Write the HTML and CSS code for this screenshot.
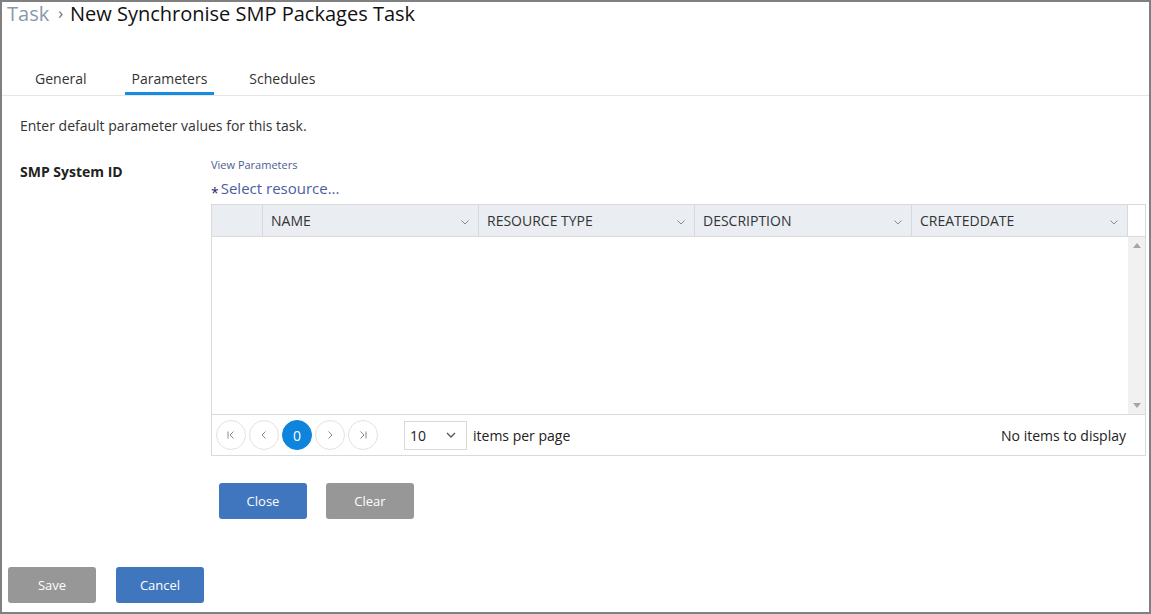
FILE: index.html
```html
<!DOCTYPE html>
<html>
<head>
<meta charset="utf-8">
<link rel="stylesheet" href="styles.css">
</head>
<body>
<div class="frame">
  <div class="title"><span class="crumb">Task</span><span class="sep">›</span><span class="page">New Synchronise SMP Packages Task</span></div>
  <div class="tabs">
    <div class="tab tab-general">General</div>
    <div class="tab tab-params active">Parameters</div>
    <div class="tab tab-sched">Schedules</div>
  </div>
  <div class="content">
    <div class="intro">Enter default parameter values for this task.</div>
    <div class="form-row">
      <div class="label">SMP System ID</div>
      <div class="field">
        <div class="view-link">View Parameters</div>
        <div class="select-res"><span class="req">*</span>Select resource...</div>
        <div class="grid">
          <div class="grid-head">
            <div class="hcell c0"></div>
            <div class="hcell c1"><span>NAME</span><svg class="chev" viewBox="0 0 8 5" width="8" height="5"><path d="M0.5 0.5 L4 4 L7.5 0.5" fill="none" stroke="#8a8a8a" stroke-width="1"/></svg></div>
            <div class="hcell c2"><span>RESOURCE TYPE</span><svg class="chev" viewBox="0 0 8 5" width="8" height="5"><path d="M0.5 0.5 L4 4 L7.5 0.5" fill="none" stroke="#8a8a8a" stroke-width="1"/></svg></div>
            <div class="hcell c3"><span>DESCRIPTION</span><svg class="chev" viewBox="0 0 8 5" width="8" height="5"><path d="M0.5 0.5 L4 4 L7.5 0.5" fill="none" stroke="#8a8a8a" stroke-width="1"/></svg></div>
            <div class="hcell c4"><span>CREATEDDATE</span><svg class="chev" viewBox="0 0 8 5" width="8" height="5"><path d="M0.5 0.5 L4 4 L7.5 0.5" fill="none" stroke="#8a8a8a" stroke-width="1"/></svg></div>
            <div class="hcell c5"></div>
          </div>
          <div class="grid-body">
            <div class="rows"></div>
            <div class="scrollbar">
              <svg viewBox="0 0 8 5" width="8" height="5"><path d="M0 5 L4 0 L8 5 Z" fill="#a6a6a6"/></svg>
              <svg viewBox="0 0 8 5" width="8" height="5"><path d="M0 0 L4 5 L8 0 Z" fill="#a6a6a6"/></svg>
            </div>
          </div>
          <div class="pager">
            <div class="pbtn"><svg viewBox="0 0 10 10" width="10" height="10"><path d="M2 1.5 V8.5 M7.5 1.5 L4 5 L7.5 8.5" fill="none" stroke="#8a8a8a" stroke-width="1"/></svg></div>
            <div class="pbtn"><svg viewBox="0 0 10 10" width="10" height="10"><path d="M6.5 1.5 L3 5 L6.5 8.5" fill="none" stroke="#8a8a8a" stroke-width="1"/></svg></div>
            <div class="pbtn current">0</div>
            <div class="pbtn"><svg viewBox="0 0 10 10" width="10" height="10"><path d="M3.5 1.5 L7 5 L3.5 8.5" fill="none" stroke="#8a8a8a" stroke-width="1"/></svg></div>
            <div class="pbtn"><svg viewBox="0 0 10 10" width="10" height="10"><path d="M2.5 1.5 L6 5 L2.5 8.5 M8 1.5 V8.5" fill="none" stroke="#8a8a8a" stroke-width="1"/></svg></div>
            <div class="pagesize"><span>10</span><svg viewBox="0 0 10 6" width="10" height="6"><path d="M1 1 L5 5 L9 1" fill="none" stroke="#555" stroke-width="1.3"/></svg></div>
            <div class="perpage">items per page</div>
            <div class="noitems">No items to display</div>
          </div>
        </div>
        <div class="actions">
          <button class="btn btn-blue">Close</button>
          <button class="btn btn-gray">Clear</button>
        </div>
      </div>
    </div>
  </div>
  <div class="footer">
    <button class="btn btn-gray">Save</button>
    <button class="btn btn-blue">Cancel</button>
  </div>
</div>
</body>
</html>
```

FILE: styles.css
```css
* { box-sizing: border-box; }
html, body { margin: 0; padding: 0; background: #fff; }
body { font-family: "Open Sans", "Noto Sans", sans-serif; color: #333; }

.frame {
  width: 1151px;
  height: 614px;
  border: 2px solid #808080;
  display: flex;
  flex-direction: column;
}

.title {
  padding-left: 5px;
  font-size: 20px;
  line-height: 24px;
  color: #111;
  white-space: nowrap;
}
.crumb { color: #8898ab; }
.sep { color: #666; font-size: 16px; margin: 0 7px 0 9px; position: relative; top: -2px; }

.tabs {
  display: flex;
  padding-top: 42px;
  padding-left: 26px;
  border-bottom: 1px solid #e6e6e6;
  font-size: 14px;
  line-height: 20px;
}
.tab {
  padding: 0 7px 3px;
  border-bottom: 3px solid transparent;
  color: #333;
}
.tab-general { margin-right: 31px; }
.tab-params { margin-right: 28px; }
.tab.active { border-bottom-color: #168de2; }

.content { padding-left: 18px; }
.intro {
  margin-top: 20px;
  font-size: 14px;
  line-height: 20px;
  color: #333;
}

.form-row {
  display: flex;
  margin-top: 22px;
}
.label {
  width: 191px;
  flex: none;
  font-weight: 700;
  font-size: 14px;
  line-height: 20px;
  padding-top: 4px;
  color: #222;
}
.field { width: 935px; }
.view-link {
  font-size: 11px;
  line-height: 14px;
  color: #4d6190;
}
.select-res {
  margin-top: 5px;
  font-size: 15px;
  line-height: 22px;
  color: #4d5ca0;
}
.req {
  color: #1e1e6a;
  font-size: 14px;
  position: relative;
  top: 4px;
  margin-right: 2px;
}

.grid {
  margin-top: 4px;
  width: 935px;
  border: 1px solid #dadada;
}
.grid-head {
  display: flex;
  height: 32px;
  border-bottom: 1px solid #dadada;
  font-size: 14px;
  color: #333;
}
.hcell {
  display: flex;
  align-items: center;
  justify-content: space-between;
  background: #eaeef3;
  border-right: 1px solid #d6d9dd;
  padding: 0 9px 0 8px;
}
.chev { margin-top: 3px; }
.c0 { width: 51px; }
.c1 { width: 216px; }
.c2 { width: 216px; }
.c3 { width: 217px; }
.c4 { width: 216px; }
.c5 { flex: 1; background: #fff; border-right: none; }

.grid-body {
  display: flex;
  height: 177px;
}
.rows { flex: 1; }
.scrollbar {
  width: 17px;
  background: #f1f1f1;
  display: flex;
  flex-direction: column;
  align-items: center;
  justify-content: space-between;
  padding: 6px 0 6px;
}

.pager {
  display: flex;
  align-items: center;
  height: 41px;
  border-top: 1px solid #dadada;
  padding: 0 19px 0 4px;
  font-size: 14px;
}
.pbtn {
  width: 30px;
  height: 30px;
  border-radius: 50%;
  border: 1px solid #e2e2e2;
  display: flex;
  align-items: center;
  justify-content: center;
  margin-right: 3px;
  font-size: 14px;
}
.pbtn.current {
  background: #0e84dc;
  border-color: #0e84dc;
  color: #fff;
}
.pagesize {
  margin-left: 23px;
  width: 63px;
  height: 29px;
  border: 1px solid #d9d9d9;
  display: flex;
  align-items: center;
  justify-content: space-between;
  padding: 0 10px 0 5px;
  color: #222;
}
.perpage { margin-left: 6px; color: #222; }
.noitems { margin-left: auto; color: #222; }

.actions {
  display: flex;
  gap: 19px;
  margin-top: 27px;
  padding-left: 8px;
}
.btn {
  width: 88px;
  height: 36px;
  border: none;
  border-radius: 3px;
  color: #fff;
  font-family: "Open Sans", "Noto Sans", sans-serif;
  font-size: 13px;
  padding: 0;
}
.btn-blue { background: #4076be; }
.btn-gray { background: #979797; }

.footer {
  margin-top: auto;
  display: flex;
  gap: 20px;
  padding: 0 0 9px 6px;
}
```
